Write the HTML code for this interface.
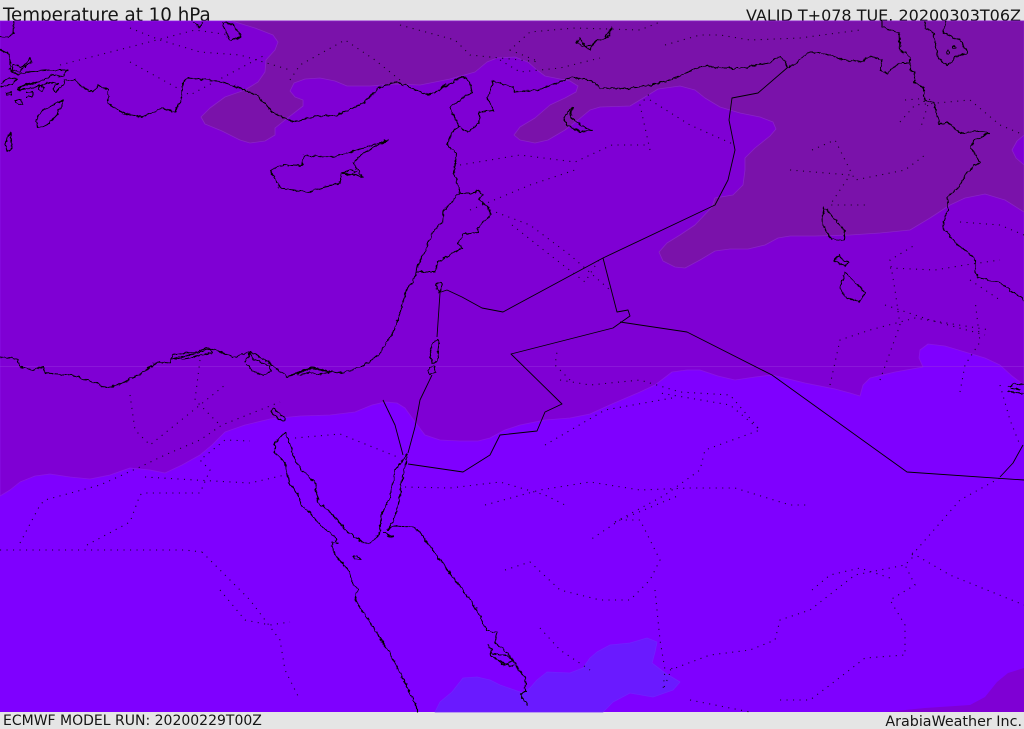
<!DOCTYPE html>
<html>
<head>
<meta charset="utf-8">
<style>
html,body{margin:0;padding:0;background:#e5e5e5;width:1024px;height:729px;overflow:hidden}
svg{display:block;position:absolute;left:0;top:0}
text{font-family:"DejaVu Sans","Liberation Sans",sans-serif;fill:#151515}
.c{fill:none;stroke:#000;stroke-width:1.1;stroke-linejoin:round}
.b{fill:none;stroke:#000;stroke-width:.9;stroke-linejoin:round}
.d{fill:none;stroke:#000;stroke-width:1.1;stroke-dasharray:1.1 5.4;opacity:.8}
</style>
</head>
<body>
<svg width="1024" height="729" viewBox="0 0 1024 729" xmlns="http://www.w3.org/2000/svg">
<defs>
<filter id="rough" filterUnits="userSpaceOnUse" x="0" y="0" width="1024" height="729" color-interpolation-filters="sRGB">
<feTurbulence type="fractalNoise" baseFrequency="0.22" numOctaves="2" seed="4" result="n"/>
<feDisplacementMap in="SourceGraphic" in2="n" scale="4" xChannelSelector="R" yChannelSelector="G"/>
</filter>
</defs>
<rect width="1024" height="729" fill="#e5e5e5"/>
<text x="3" y="21" font-size="18.27">Temperature at 10 hPa</text>
<text x="1021" y="21" font-size="16" text-anchor="end">VALID T+078 TUE. 20200303T06Z</text>
<text x="3" y="725" font-size="14">ECMWF MODEL RUN: 20200229T00Z</text>
<text x="1022" y="726" font-size="14.3" text-anchor="end">ArabiaWeather Inc.</text>

<rect x="0" y="21" width="1024" height="691" fill="#7f00ff"/>

<!-- mid purple region -->
<path fill="#7f00d4" stroke="#8a14e6" stroke-width=".8" stroke-linejoin="round" d="M0,496 L10,490 L20,482 L35,476 L50,474 L70,477 L90,479 L110,475 L130,468 L150,470 L165,473 L182,465 L200,455 L212,445 L225,432 L245,425 L270,419 L300,416 L330,415 L355,412 L372,405 L385,402 L397,403 L405,408 L415,422 L425,435 L440,440 L460,441 L478,441 L490,438 L505,430 L520,425 L545,420 L570,418 L590,414 L612,404 L640,392 L655,385 L672,372 L687,370 L700,370 L718,376 L735,380 L755,377 L772,375 L805,383 L835,389 L850,393 L860,396 L863,385 L870,378 L895,372 L923,367 L919,358 L920,350 L928,344 L945,346 L965,352 L985,358 L1000,365 L1012,376 L1024,385 L1024,21 L0,21 Z"/>

<!-- brown-purple top region -->
<path fill="#7a12aa" stroke="#8a22c8" stroke-width=".8" stroke-linejoin="round" d="M232,21 L255,28 L273,35 L278,42 L275,50 L266,60 L265,72 L258,82 L245,90 L225,97 L210,108 L201,117 L205,124 L222,131 L240,140 L250,143 L265,141 L275,135 L275,128 L285,120 L303,106 L303,100 L295,97 L290,91 L294,83 L305,79 L320,78 L335,81 L347,86 L370,86 L395,84 L420,85 L450,79 L475,72 L487,62 L497,58 L515,57 L528,62 L537,70 L545,76 L555,78 L570,81 L578,86 L576,92 L565,98 L550,105 L535,118 L520,127 L514,135 L520,140 L535,143 L548,140 L565,130 L578,120 L590,110 L600,107 L630,106 L645,97 L658,89 L680,86 L695,90 L705,98 L720,107 L740,113 L760,117 L773,122 L776,129 L770,136 L755,148 L745,158 L745,170 L743,185 L733,195 L715,198 L712,207 L695,225 L680,235 L667,243 L659,252 L663,261 L675,267 L685,268 L700,260 L715,251 L730,249 L748,249 L765,245 L778,238 L790,236 L815,236 L850,235 L880,233 L910,230 L930,218 L950,205 L965,198 L985,194 L1005,200 L1024,212 L1024,165 L1016,158 L1012,150 L1017,141 L1024,135 L1024,21 Z"/>

<!-- blue patch -->
<path fill="#6a1aff" stroke="#7220ff" stroke-width=".8" stroke-linejoin="round" d="M435,712 L440,702 L452,692 L463,678 L477,677 L490,680 L500,685 L523,693 L530,688 L537,680 L547,672 L570,673 L583,668 L590,658 L597,652 L610,645 L630,643 L647,638 L657,642 L655,652 L652,663 L665,673 L680,682 L673,690 L653,697 L630,693 L613,702 L603,712 Z"/>

<!-- bottom right corner -->
<path fill="#7f00d4" d="M885,712 L925,708 L970,705 L985,697 L997,682 L1008,673 L1024,668 L1024,712 Z"/>

<!-- seam -->
<rect x="0" y="366" width="1024" height="1" fill="#9a30e0" opacity=".45"/>

<!-- dotted internal boundaries -->
<g class="d">
<path d="M0,550 L185,550 L202,552"/>
<path d="M20,543 L40,505 L45,500 L100,485 L140,467 L165,455 L200,440 L222,425 L280,402"/>
<path d="M87,545 L130,522 L140,495 L143,493 L200,493 L210,470 L200,460 L225,440 L250,441"/>
<path d="M145,477 L195,480 L250,483 L285,475"/>
<path d="M202,552 L215,565 L250,600 L280,640 L285,670 L300,700"/>
<path d="M220,590 L245,620 L270,625 L290,622"/>
<path d="M295,438 L340,434 L400,458"/>
<path d="M405,487 L450,488 L500,482 L545,495 L565,505"/>
<path d="M485,505 L540,490 L590,482 L640,490 L690,488 L735,488 L790,505 L810,505"/>
<path d="M505,570 L530,562 L560,590 L600,600 L630,600 L650,580 L660,560 L650,540 L640,520 L620,520 L590,540"/>
<path d="M540,628 L560,650 L590,670"/>
<path d="M655,590 L660,640 L665,670 L663,690 L672,668"/>
<path d="M670,670 L710,655 L750,650 L775,640 L780,620 L810,610 L855,575 L905,565 L915,555"/>
<path d="M690,700 L750,712"/>
<path d="M780,700 L810,700 L830,685 L865,658 L905,655 L905,625 L890,600 L915,585 L905,565"/>
<path d="M912,555 L960,500 L1000,478"/>
<path d="M912,553 L950,575 L1024,605"/>
<path d="M812,590 L830,575 L860,568 L890,578"/>
<path d="M615,522 L665,495 L700,470 L705,450 L760,430 L730,405 L660,393"/>
<path d="M615,522 L680,495"/>
<path d="M545,445 L605,410 L672,398"/>
<path d="M560,380 L590,385 L640,380 L680,392 L730,395 L760,430"/>
<path d="M570,380 L555,365 L557,352"/>
<path d="M830,385 L840,340 L870,330 L915,318 L990,330"/>
<path d="M880,380 L900,325 L895,290 L890,260 L915,245"/>
<path d="M960,392 L965,365 L980,342 L975,300"/>
<path d="M1000,385 L1010,420 L1020,445"/>
<path d="M890,268 L935,270 L965,265 L1000,260"/>
<path d="M885,305 L930,320 L985,335"/>
<path d="M960,222 L1000,225 L1024,235"/>
<path d="M512,225 L550,255 L585,282 L600,258"/>
<path d="M490,210 L530,225 L570,255 L610,290"/>
<path d="M460,165 L520,155 L575,162 L612,145 L650,145"/>
<path d="M470,210 L530,185 L575,170"/>
<path d="M650,150 L640,105 L650,93"/>
<path d="M650,100 L690,125 L735,145"/>
<path d="M790,170 L850,175 L830,205 L870,205"/>
<path d="M812,150 L835,140 L855,180 L905,170 L925,155"/>
<path d="M900,122 L915,105 L970,100 L1000,125 L1024,135"/>
<path d="M905,100 L930,98 L920,130"/>
<path d="M535,60 L510,50 L530,32 L575,28 L640,30 L660,22"/>
<path d="M665,45 L700,35 L720,35 L750,40 L800,38 L860,30"/>
<path d="M500,60 L520,72 L560,68 L600,58"/>
<path d="M400,25 L455,40 L470,55 L540,62"/>
<path d="M290,80 L300,65 L345,40 L375,60 L400,80"/>
<path d="M60,65 L130,47 L195,30 L230,35"/>
<path d="M130,28 L160,40 L200,52 L240,55 L290,70"/>
<path d="M130,62 L190,95 L265,55"/>
<path d="M130,395 L135,430 L150,445 L225,385"/>
<path d="M200,360 L195,400 L220,425"/>
<path d="M970,280 L1000,300"/>
</g>

<!-- coastlines -->
<g class="c" filter="url(#rough)">
<path d="M0,37 L8,38 L13,33 L14,21"/>
<path d="M0,50 L8,52 L10,58 L10,70 L20,72 L30,58 L32,62 L25,67 L13,65 L12,72 L17,75 L27,72 L50,70 L68,70 L62,77 L53,75 L38,82 L23,85 L18,90 L33,88 L50,82 L58,83 L53,88 L55,93 L63,85 L65,80 L75,80 L83,88 L93,92 L98,85 L108,90 L108,103 L120,112 L132,115 L142,117 L163,108 L175,112 L182,97 L183,82 L188,78 L217,81 L237,87 L257,95 L272,112 L293,122 L313,117 L337,115 L353,108 L363,103 L380,87 L395,82 L405,85 L428,95 L440,90 L462,76 L470,82 L472,92 L450,107 L459,127 L452,132 L447,145 L456,153 L454,173 L460,192 L443,212 L442,223 L433,232 L423,255 L415,272 L413,283 L407,287 L400,313 L393,333 L380,353 L368,363 L353,370 L338,373 L328,371 L313,367 L297,373 L287,377 L272,365 L257,355 L250,352 L233,357 L220,352 L208,348 L195,352 L172,355 L170,363 L157,362 L143,372 L123,383 L107,388 L95,383 L72,375 L45,373 L43,367 L33,370 L20,367 L17,359 L0,357"/>
<path d="M1,83 L8,78 L17,79 L12,84 L1,87"/><path d="M18,88 L30,84 L18,87"/>
<path d="M6,93 L11,92 L11,95 L6,95 Z"/><path d="M15,100 L21,100 L23,105 L16,103 Z"/>
<path d="M26,92 L33,92 L33,97 L26,97"/><path d="M40,85 L44,88 L42,92 L38,90Z"/>
<path d="M63,100 L43,110 L36,120 L38,128 L47,125 L57,115 Z"/>
<path d="M10,133 L5,143 L7,152 L12,148 Z"/>
<path d="M193,22 L199,28 L203,22"/>
<path d="M222,23 L230,41 L241,37 L233,25 L226,22 Z"/>
<path d="M270,170 L282,165 L302,166 L304,155 L333,157 L367,147 L388,140 L363,153 L353,163 L363,177 L342,173 L340,183 L307,192 L280,188 Z"/>
<path d="M342,173 L352,170 L356,172 L350,175Z"/>
<path d="M576,42 L580,38 L584,45 L590,50 L596,41 L604,38 L612,28 L608,37 L598,40 L590,46 L581,46 Z"/>
<path d="M573,107 L564,117 L567,125 L580,132 L592,130 L584,127 L570,117 Z"/>
<path d="M924,21 L925,28 L933,32 L938,57 L947,66 L955,57 L968,53 L960,40 L943,33 L946,21"/>
<ellipse cx="948" cy="52" rx="1.5" ry="2"/><ellipse cx="954" cy="47" rx="2" ry="1.3"/>
<path d="M824,208 L822,220 L826,232 L832,239 L844,240 L845,230 L837,222 L827,210 Z"/>
<path d="M839,255 L834,260 L845,267 L849,262 L843,260 Z"/>
<path d="M845,272 L840,287 L845,297 L859,302 L865,293 L858,285 L850,277 Z"/>
<path d="M1008,387 L1015,383 L1024,385 M1008,391 L1024,394 M1010,388 L1020,390"/>
<ellipse cx="439" cy="287" rx="3" ry="4.5"/>
<path d="M432,345 L437,340 L439,342 L437,362 L432,363 L430,352 Z"/>
<path d="M430,367 L434,366 L436,372 L431,375 L428,371 Z"/>
<path d="M271,411 L274,408 L280,414 L285,418 L285,421 L279,419 L273,414 Z"/>
<path d="M285,432 L275,443 L274,452 L285,462 L289,483 L298,495 L302,505 L310,513 L320,525 L335,537 L337,543 L332,542 L333,552 L342,563 L350,572 L352,582 L358,590 L355,600 L360,607 L377,633 L390,653 L407,687 L417,707 L417,712"/>
<path d="M283,433 L285,432 L292,450 L295,460 L302,470 L315,482 L318,502 L335,517 L347,532 L362,542 L370,544 L380,533 L381,515 L390,497 L395,470 L407,455 L408,455 L402,480 L398,507 L392,523 L388,530 L393,526 L413,527 L420,532 L435,553 L450,573 L463,590 L477,610 L487,630 L497,633 L495,643 L508,653 L517,667 L525,677 L526,692 L520,695 L528,705"/>
<path d="M353,557 L358,556 L361,560 L355,559 Z"/><path d="M384,533 L388,535 L394,536 L390,537 Z"/>
<path d="M488,645 L492,650 L490,655 L505,665 L514,660 L506,655 L498,655 L490,652"/>
<path d="M500,660 L510,667 L514,665"/>
<path d="M172,359 L192,354 L210,349 L212,353 L198,356 L184,359 Z"/>
<path d="M245,362 L250,353 L254,360 L270,366 L271,372 L262,375 L256,373 L246,364"/>
<path d="M290,376 L305,371 L312,368 L330,372 L318,375 L310,372 L300,375"/>
<path d="M440,90 L446,86 L441,88 L446,84"/>
<path d="M460,128 L468,132 L479,123 L479,112 L493,110 L488,98 L493,81 L513,87 L515,92 L537,90 L557,83 L572,77 L590,80 L600,88 L625,89 L652,85 L675,78 L702,66 L725,68 L742,68 L769,63 L779,56 L785,60 L787,68 L795,65 L807,53 L822,53 L845,60 L860,62 L870,56 L882,60 L880,70 L887,73 L900,63 L909,63"/>
<path d="M882,21 L882,27 L899,33 L900,50 L910,57 L910,70 L915,72 L914,82 L924,88 L924,100 L934,103 L939,123 L949,123 L960,133 L979,131 L990,133 L974,140 L971,148 L980,162 L967,172 L959,187 L947,197 L948,210 L942,227 L958,245 L975,258 L975,272 L978,278 L1000,283 L1024,300"/>
<path d="M460,193 L475,193 L477,190 L483,195 L478,200 L488,207 L491,215 L478,227 L479,233 L463,234 L458,243 L462,248 L438,262 L435,272 L415,272"/>
</g>

<!-- borders -->
<g class="b">
<path d="M383,400 L395,425 L403,455"/>
<path d="M440,293 L437,337 M432,375 L420,400 L415,427 L408,453"/>
<path d="M438,293 L447,290 L462,297 L482,308 L503,312 L603,258 L715,205 L728,180 L735,150 L729,120 L732,98 L758,93 L787,68"/>
<path d="M408,464 L463,472 L490,455 L500,435 L537,431 L545,412 L562,404 L511,354 L613,328 L620,323 L630,316 L628,310 L617,312 L603,258"/>
<path d="M620,322 L687,332 L772,375 L907,472 L1024,480"/>
<path d="M1000,477 L1013,463 L1023,445"/>
</g>
</svg>
</body>
</html>
